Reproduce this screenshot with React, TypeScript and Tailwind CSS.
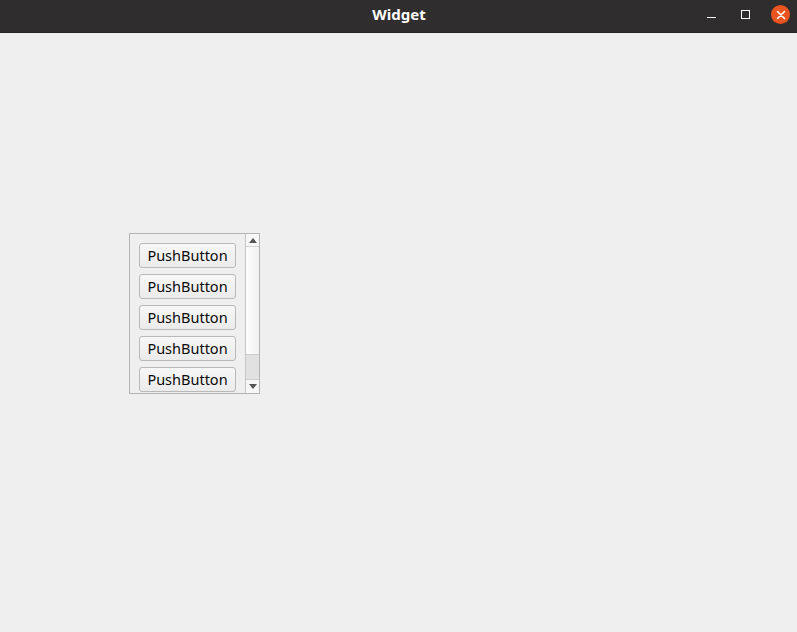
import React from "react";

const Btn = () => (
  <div className="w-[97px] h-[25px] shrink-0 rounded-[3px] border border-[#b9b9b9] bg-gradient-to-b from-[#f7f7f7] to-[#ebebeb] flex items-center justify-center text-[14.5px] text-[#0a0a0a]" style={{ fontFamily: '"Noto Sans", "DejaVu Sans", sans-serif' }}>
    PushButton
  </div>
);

export default function App() {
  return (
    <div className="w-[797px] h-[632px] bg-[#efefef] flex flex-col overflow-hidden">
      <div className="h-[33px] shrink-0 bg-[#2f2d2d] border-b border-[#252323] relative flex items-center justify-center">
        <span className="text-white font-bold text-[15px] leading-none pl-[1px] mb-[3px]" style={{ fontFamily: '"Noto Sans", "DejaVu Sans", sans-serif' }}>Widget</span>
        <div className="absolute right-[7px] top-[5px] flex items-center">
          <div className="w-[9px] h-[1px] bg-white mt-[6px] mr-[25px]" />
          <div className="w-[9px] h-[9px] border border-white mr-[21px]" />
          <div className="w-[19px] h-[19px] rounded-full bg-[#e95420] flex items-center justify-center">
            <svg width="10" height="10" viewBox="0 0 10 10">
              <path d="M1.5 1.5 L8.5 8.5 M8.5 1.5 L1.5 8.5" stroke="white" strokeWidth="1.6" strokeLinecap="round" />
            </svg>
          </div>
        </div>
      </div>
      <div className="pl-[129px] pt-[200px]">
        <div className="w-[131px] h-[161px] border border-[#b4b4b4] flex">
          <div className="w-[115px] h-full overflow-hidden pl-[9px] pt-[9px] flex flex-col gap-[6px]">
            <Btn />
            <Btn />
            <Btn />
            <Btn />
            <Btn />
          </div>
          <div className="w-[14px] h-full border-l border-[#c4c4c4] bg-[#f7f7f7] flex flex-col">
            <div className="h-[13px] border-b border-[#d4d4d4] flex items-center justify-center">
              <svg width="8" height="5" viewBox="0 0 8 5"><path d="M0 5 L4 0 L8 5 Z" fill="#555" /></svg>
            </div>
            <div className="flex-1 bg-gradient-to-r from-[#fdfdfd] to-[#f1f1f1]" />
            <div className="h-[26px] bg-[#e1e1e1] border-y border-[#cfcfcf]" />
            <div className="h-[13px] flex items-center justify-center">
              <svg width="8" height="5" viewBox="0 0 8 5"><path d="M0 0 L4 5 L8 0 Z" fill="#555" /></svg>
            </div>
          </div>
        </div>
      </div>
    </div>
  );
}
